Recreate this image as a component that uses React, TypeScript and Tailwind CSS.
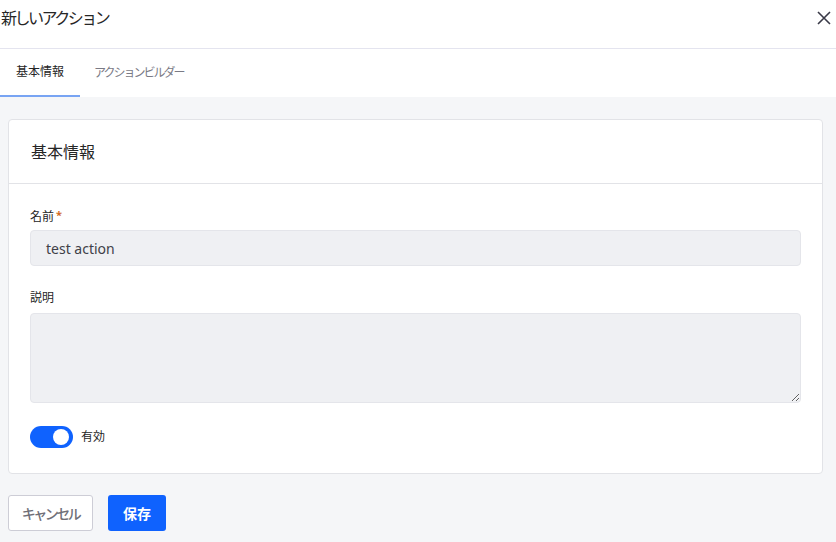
import React from "react";

export default function App() {
  const font = { fontFamily: '"Noto Sans", "Noto Sans CJK JP", sans-serif' };
  return (
    <div className="w-[836px] h-[542px] flex flex-col bg-[#f5f6f8] text-[#161616] overflow-hidden" style={font}>
      <div className="bg-white">
        <div className="h-[49px] flex items-center justify-between pl-[1px] pr-[5px] pb-[12px] border-b border-[#e4e4ef]">
          <div className="text-[16px] text-[#262626] tracking-[-2.5px]">新しいアクション</div>
          <svg width="14" height="14" viewBox="0 0 14 14" className="text-[#3a3a48]">
            <path d="M1 1L13 13M13 1L1 13" stroke="currentColor" strokeWidth="1.6" fill="none" />
          </svg>
        </div>
        <div className="h-[48px] flex items-stretch">
          <div className="w-[80px] flex items-center justify-center text-[12px] text-[#262626] border-b-2 border-[#78a4f3]">基本情報</div>
          <div className="px-[14px] flex items-center text-[12px] text-[#7a7a85] tracking-[-2px]">アクションビルダー</div>
        </div>
      </div>
      <div className="flex-1 pl-[8px] pr-[13px] pt-[22px]">
        <div className="bg-white border border-[#e2e3e7] rounded-[4px]">
          <div className="h-[64px] flex items-center px-[22px] border-b border-[#e2e3e7] text-[16px] text-[#262626]">基本情報</div>
          <div className="px-[21px] pt-[25px] pb-[25px] flex flex-col">
            <div className="text-[12px] leading-[16px] text-[#262626] flex items-start">名前<span className="text-[#d2691e] text-[11px] leading-[12px] ml-[2px] font-bold">*</span></div>
            <div className="mt-[5px] h-[36px] bg-[#eff0f3] border border-[#e4e5ea] rounded-[4px] flex items-center px-[15px] text-[14px] text-[#404048]">test action</div>
            <div className="mt-[24px] text-[12px] leading-[16px] text-[#262626]">説明</div>
            <textarea className="mt-[7px] h-[90px] bg-[#eff0f3] border border-[#e4e5ea] rounded-[4px] outline-none" readOnly />
            <div className="mt-[23px] flex items-center gap-[8px]">
              <div className="w-[43px] h-[22px] rounded-full bg-[#0f62fe] flex items-center justify-end pr-[4px]">
                <div className="w-[16px] h-[16px] rounded-full bg-white" />
              </div>
              <div className="text-[12px] text-[#262626]">有効</div>
            </div>
          </div>
        </div>
        <div className="mt-[21px] flex gap-[15px]">
          <button className="h-[36px] w-[85px] bg-white border border-[#cdcdd6] rounded-[3px] text-[14px] text-[#6f6f78] font-medium tracking-[-2.5px]">キャンセル</button>
          <button className="h-[36px] w-[58px] bg-[#0f62fe] rounded-[3px] text-[14px] text-white font-bold">保存</button>
        </div>
      </div>
    </div>
  );
}
